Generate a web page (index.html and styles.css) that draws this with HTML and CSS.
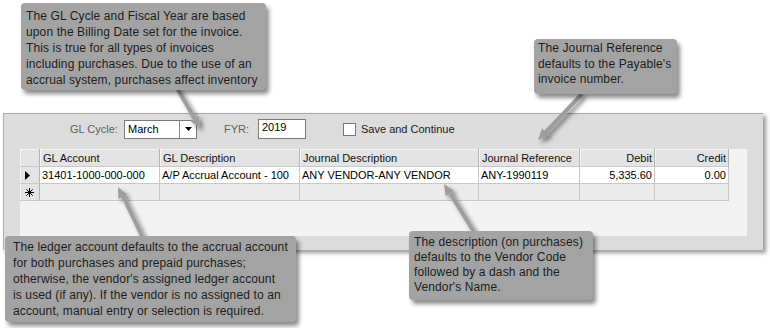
FILE: index.html
```html
<!DOCTYPE html>
<html lang="en">
<head>
  <meta charset="UTF-8" />
  <title>GL Distribution</title>
  <link rel="stylesheet" href="styles.css">
</head>
<body>

  <!-- Formulario de distribuicao -->
  <div class="form">
    <div class="toolbar">
      <span class="lbl lbl-cycle">GL Cycle:</span>
      <div class="combo">
        <span class="combo-text">March</span>
        <span class="combo-drop">
          <svg width="7" height="4" viewBox="0 0 7 4"><path d="M0 0 H7 L3.5 4 Z" fill="#000"/></svg>
        </span>
      </div>
      <span class="lbl lbl-fyr">FYR:</span>
      <div class="textbox">2019</div>
      <span class="check"><span class="check-box"></span>Save and Continue</span>
    </div>

    <div class="grid">
      <div class="rows">
        <div class="hcell corner"></div>
        <div class="hcell">GL Account</div>
        <div class="hcell">GL Description</div>
        <div class="hcell">Journal Description</div>
        <div class="hcell">Journal Reference</div>
        <div class="hcell num">Debit</div>
        <div class="hcell num">Credit</div>

        <div class="rhead">
          <svg width="6" height="9" viewBox="0 0 6 9"><path d="M0 0 L5 4.5 L0 9 Z" fill="#000"/></svg>
        </div>
        <div class="cell">31401-1000-000-000</div>
        <div class="cell">A/P Accrual Account - 100</div>
        <div class="cell">ANY VENDOR-ANY VENDOR</div>
        <div class="cell">ANY-1990119</div>
        <div class="cell num">5,335.60</div>
        <div class="cell num">0.00</div>

        <div class="rhead">
          <svg width="9" height="9" viewBox="0 0 9 9" stroke="#000" stroke-width="1">
            <path d="M4.5 0 V9 M0 4.5 H9 M1.3 1.3 L7.7 7.7 M7.7 1.3 L1.3 7.7"/>
          </svg>
        </div>
        <div class="cell new"></div>
        <div class="cell new"></div>
        <div class="cell new"></div>
        <div class="cell new"></div>
        <div class="cell new"></div>
        <div class="cell new"></div>
      </div>
    </div>
  </div>

  <!-- Setas das notas -->
  <svg class="arrows" width="770" height="328" viewBox="0 0 770 328">
    <defs>
      <filter id="sombra" x="-50%" y="-50%" width="200%" height="200%">
        <feDropShadow dx="3" dy="3" stdDeviation="2" flood-color="#000" flood-opacity="0.45"/>
      </filter>
    </defs>
    <g filter="url(#sombra)" fill="#9d9d9d" stroke="#9d9d9d" stroke-width="4">
      <line x1="177" y1="88" x2="195" y2="119"/>
      <polygon stroke="none" points="200,128 190.2,121 198.9,116"/>

      <line x1="582" y1="94" x2="545" y2="133"/>
      <polygon stroke="none" points="538,140 542,128.6 549.2,135.5"/>

      <line x1="142" y1="236" x2="123" y2="196"/>
      <polygon stroke="none" points="118,187 127.3,194.7 118.4,199.1"/>

      <line x1="474" y1="232" x2="450" y2="193"/>
      <polygon stroke="none" points="444,184 454.1,190.7 445.6,196"/>
    </g>
  </svg>

  <!-- Notas -->
  <div class="callout c1">The GL Cycle and Fiscal Year are based<br>upon the Billing Date set for the invoice.<br>This is true for all types of invoices<br>including purchases. Due to the use of an<br>accrual system, purchases affect inventory</div>
  <div class="callout c2">The Journal Reference<br>defaults to the Payable's<br>invoice number.</div>
  <div class="callout c3">The ledger account defaults to the accrual account<br>for both purchases and prepaid purchases;<br>otherwise, the vendor's assigned ledger account<br>is used (if any). If the vendor is no assigned to an<br>account, manual entry or selection is required.</div>
  <div class="callout c4">The description (on purchases)<br>defaults to the Vendor Code<br>followed by a dash and the<br>Vendor's Name.</div>

</body>
</html>
```

FILE: styles.css
```css
html, body {
  margin: 0;
  background: #fff;
  font-family: 'Liberation Sans', Arial, sans-serif;
  color: #000;
}

body {
  padding: 113px 0 0 3px;
  width: 767px;
  height: 215px;
  overflow: hidden;
}

/* Painel cinza do formulario */
.form {
  width: 759px;
  height: 136px;
  background: #dcdcdc;
  border-top: 1px solid #a8a8a8;
  border-left: 1px solid #b0b0b0;
  box-shadow: 3px 3px 4px rgba(0, 0, 0, 0.4);
}

.toolbar {
  display: flex;
  align-items: center;
  height: 20px;
  margin-top: 5px;
  padding-left: 66px;
  font-size: 11px;
}

.lbl {
  color: #606060;
}

.lbl-cycle { width: 54px; }
.lbl-fyr { width: 34px; margin-left: 27px; }

.combo {
  display: flex;
  width: 73px;
  height: 19px;
  box-sizing: border-box;
  border: 1px solid #7a7a7a;
  background: #fff;
}

.combo-text {
  flex: 1;
  padding-left: 3px;
  line-height: 17px;
}

.combo-drop {
  width: 16px;
  border-left: 1px solid #8a8a8a;
  display: flex;
  align-items: center;
  justify-content: center;
}

.textbox {
  width: 48px;
  height: 20px;
  box-sizing: border-box;
  border: 1px solid #7a7a7a;
  background: #fff;
  padding-left: 3px;
  line-height: 15px;
}

.check {
  display: flex;
  align-items: center;
  margin-left: 37px;
  color: #1a1a1a;
}

.check-box {
  width: 13px;
  height: 13px;
  box-sizing: border-box;
  border: 1px solid #777;
  background: #fff;
  margin-right: 5px;
}

/* Grade de lancamentos */
.grid {
  margin: 10px 0 0 16px;
  width: 727px;
  height: 87px;
  background: #f3f3f3;
}

.rows {
  display: grid;
  grid-template-columns: 20px 120px 140px 179px 101px 75px 74px;
  grid-template-rows: 18px 17px 17px;
  width: 709px;
  font-size: 11px;
}

.hcell, .rhead, .cell {
  box-sizing: border-box;
  border-right: 1px solid #c8c8c8;
  border-bottom: 1px solid #c8c8c8;
  padding: 0 3px;
  white-space: nowrap;
  overflow: hidden;
}

.hcell {
  background: #e3e3e3;
  line-height: 18px;
  color: #111;
  border-right-color: #b4b4b4;
  box-shadow: inset 1px 1px 0 #f4f4f4;
}

.rhead {
  background: #e3e3e3;
  display: flex;
  align-items: center;
  padding-left: 5px;
  border-right-color: #b4b4b4;
  box-shadow: inset 1px 0 0 #f4f4f4;
}

.cell {
  background: #fff;
  line-height: 16px;
  padding-left: 2px;
}

.cell.new {
  background: #ebebeb;
}

.num {
  text-align: right;
  padding-right: 2px;
}

/* Setas e notas explicativas */
.arrows {
  position: absolute;
  left: 0;
  top: 0;
  pointer-events: none;
}

.callout {
  position: absolute;
  box-sizing: border-box;
  background: #a3a3a3;
  color: #1c1c1c;
  font-size: 12px;
  line-height: 16px;
  letter-spacing: 0.12px;
  white-space: nowrap;
  border-radius: 4px;
  box-shadow: 3px 4px 4px rgba(0, 0, 0, 0.45);
  padding: 5px 4px 0 5px;
}

.c1 { left: 21px; top: 3px; width: 245px; height: 87px; }
.c2 { left: 534px; top: 39px; width: 143px; height: 55px; line-height: 15.5px; padding-top: 2px; padding-left: 4px; }
.c3 { left: 5px; top: 236px; width: 291px; height: 86px; padding-top: 3px; padding-left: 8px; }
.c4 { left: 409px; top: 231px; width: 184px; height: 69px; line-height: 15px; padding-top: 4px; }
```
